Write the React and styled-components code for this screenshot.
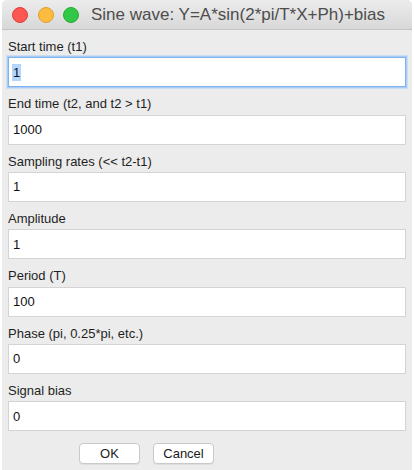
import React from "react";
import styled, { createGlobalStyle } from "styled-components";

const Global = createGlobalStyle`
  html, body { margin: 0; padding: 0; background: #ffffff; }
  body { font-family: "Liberation Sans", Arial, Helvetica, sans-serif; }
`;

const Window = styled.div`
  margin-left: 2px;
  width: 410px;
  height: 470px;
  background: #ececec;
  border-radius: 5px 5px 0 0;
  overflow: hidden;
  display: flex;
  flex-direction: column;
`;

const TitleBar = styled.div`
  height: 30px;
  box-sizing: border-box;
  padding: 1px 0 0 10px;
  border-bottom: 1px solid #c4c4c4;
  background: linear-gradient(#ececec, #d8d8d8);
  display: flex;
  align-items: center;
  gap: 9.5px;
`;

const Light = styled.span`
  width: 16px;
  height: 16px;
  border-radius: 50%;
  background: ${(p) => p.$c};
  border: 0.5px solid ${(p) => p.$b};
  box-sizing: border-box;
  flex: none;
`;

const Title = styled.div`
  margin-left: 2.5px;
  font-size: 17px;
  color: #4d4d4d;
  white-space: nowrap;
`;

const Form = styled.div`
  padding: 0 6px;
  display: flex;
  flex-direction: column;
`;

const Label = styled.div`
  height: 27.33px;
  box-sizing: border-box;
  padding-top: 9px;
  font-size: 13px;
  line-height: 15px;
  color: #1f1f1f;
`;

const Input = styled.div`
  height: 30px;
  box-sizing: border-box;
  background: #ffffff;
  border: 1px solid ${(p) => (p.$focus ? "#7fb2ee" : "#d4d4d4")};
  box-shadow: ${(p) => (p.$focus ? "0 0 0 1.5px #a9cdf6" : "none")};
  display: flex;
  align-items: center;
  padding-left: 3px;
  font-size: 13px;
  color: #111;
`;

const Sel = styled.span`
  background: ${(p) => (p.$on ? "#b3d6fc" : "transparent")};
  padding: 1px 1px;
`;

const Buttons = styled.div`
  display: flex;
  gap: 13px;
  padding: 12px 0 0 77px;
`;

const Button = styled.button`
  width: 61px;
  height: 21px;
  background: #ffffff;
  border: 1px solid #c9c9c9;
  border-radius: 4px;
  box-shadow: 0 1px 0 rgba(0, 0, 0, 0.06);
  font-family: "Liberation Sans", Arial, sans-serif;
  font-size: 13px;
  color: #1a1a1a;
  padding: 0;
`;

const fields = [
  ["Start time (t1)", "1", true],
  ["End time (t2, and t2 > t1)", "1000"],
  ["Sampling rates (<< t2-t1)", "1"],
  ["Amplitude", "1"],
  ["Period (T)", "100"],
  ["Phase (pi, 0.25*pi, etc.)", "0"],
  ["Signal bias", "0"],
];

export default function App() {
  return (
    <>
      <Global />
      <Window>
        <TitleBar>
          <Light $c="#fc5753" $b="#df3d38" />
          <Light $c="#fdbc40" $b="#de9f34" />
          <Light $c="#33c748" $b="#27aa35" />
          <Title>Sine wave: Y=A*sin(2*pi/T*X+Ph)+bias</Title>
        </TitleBar>
        <Form>
          {fields.map(([label, value, focus]) => (
            <div key={label}>
              <Label>{label}</Label>
              <Input $focus={focus}>
                <Sel $on={focus}>{value}</Sel>
              </Input>
            </div>
          ))}
        </Form>
        <Buttons>
          <Button>OK</Button>
          <Button>Cancel</Button>
        </Buttons>
      </Window>
    </>
  );
}
